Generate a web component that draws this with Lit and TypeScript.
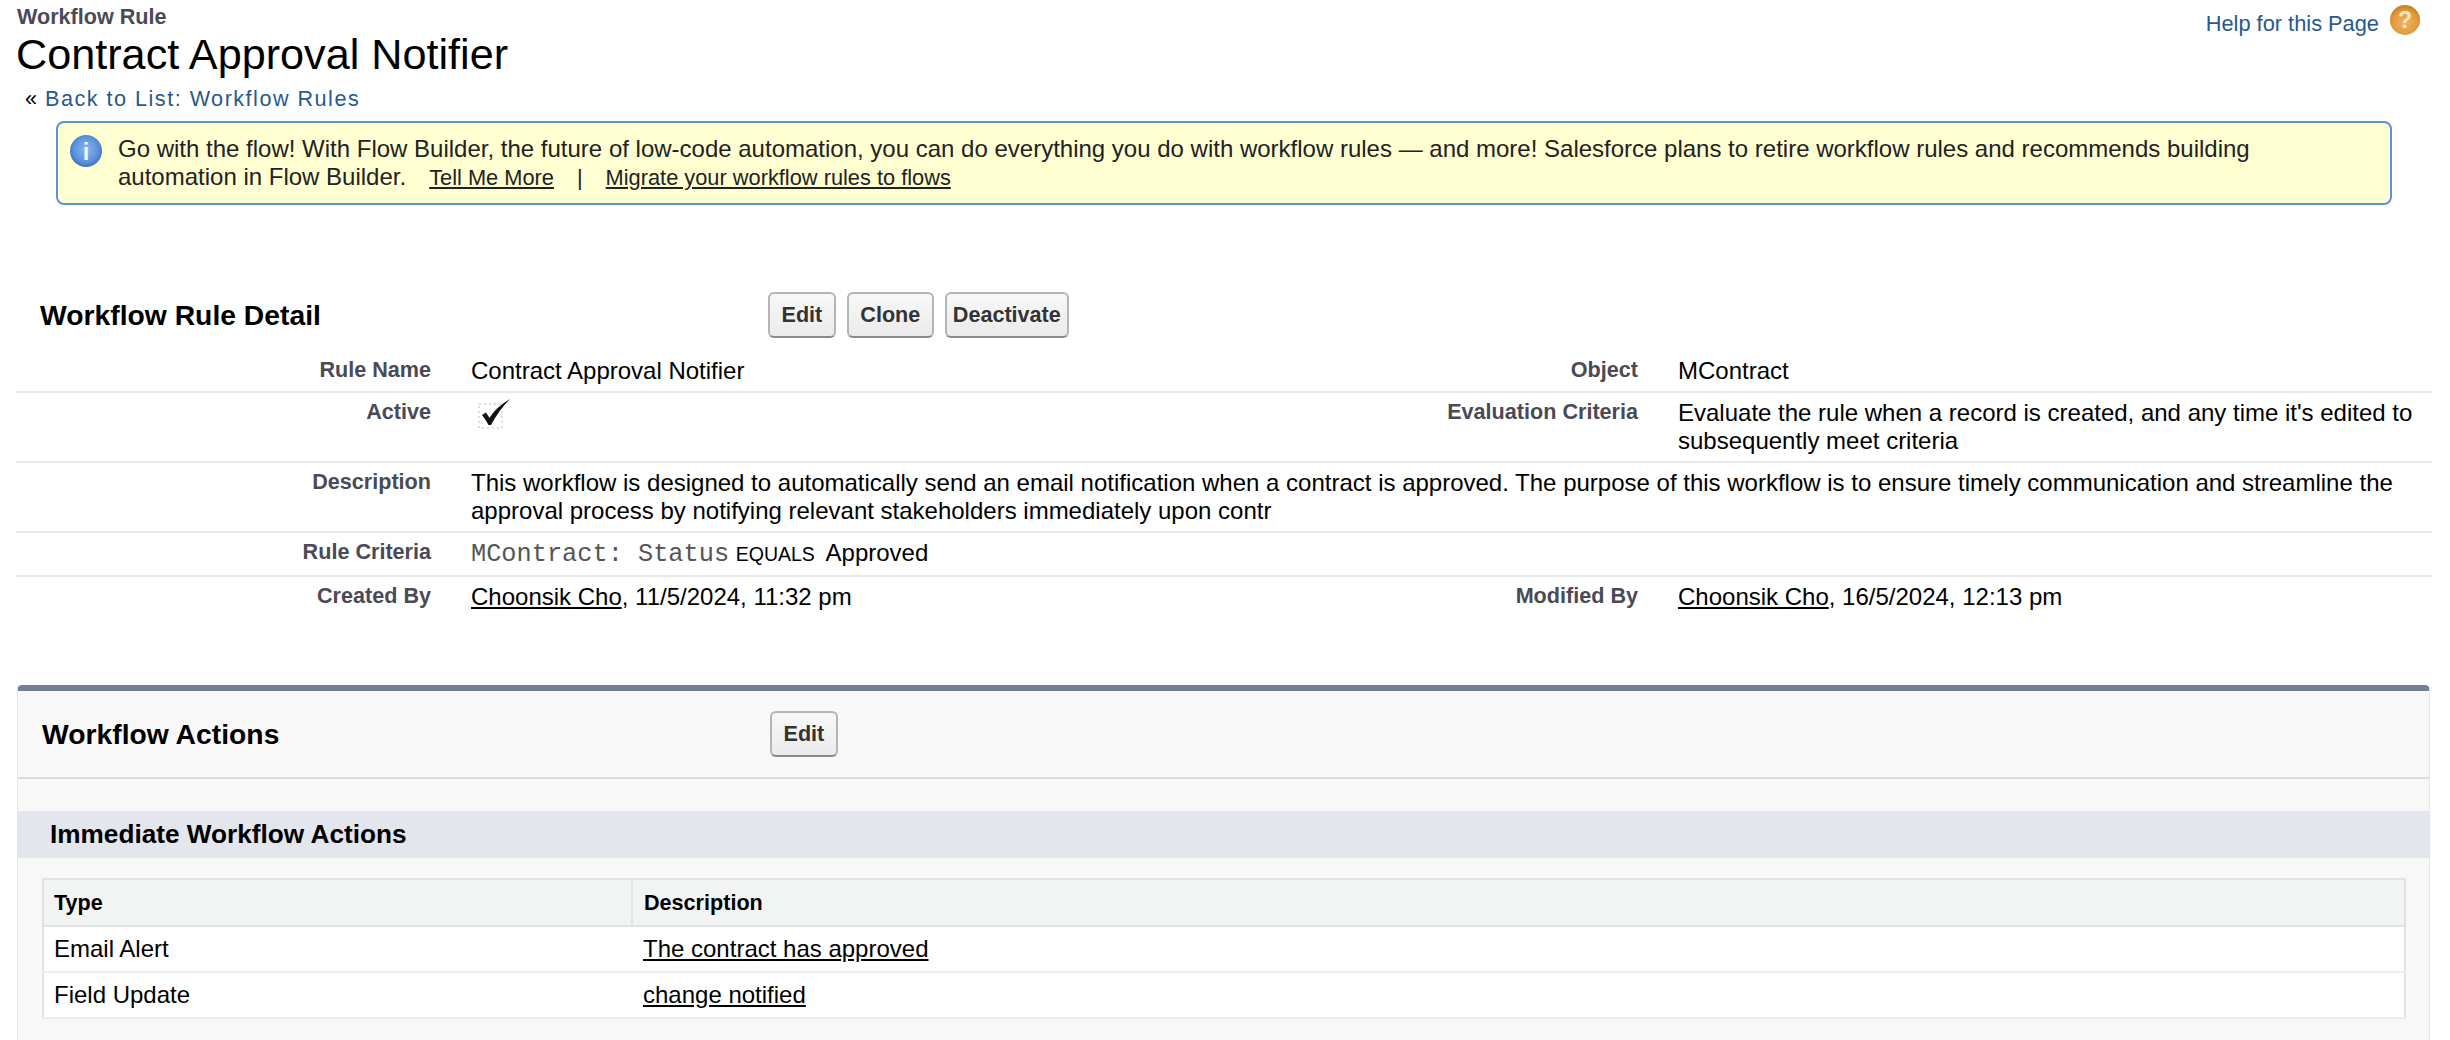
import { LitElement, html, css } from "lit";
import { customElement } from "lit/decorators.js";

@customElement("app-root")
export class AppRoot extends LitElement {
  static styles = css`
    :host {
      display: block;
      height: 1040px;
      overflow: hidden;
      background: #fff;
      color: #000;
      font-family: "Liberation Sans", Arial, sans-serif;
      font-size: 24px;
      line-height: 28px;
    }

    a {
      color: inherit;
    }

    /* Page header */
    .page-head {
      display: flex;
      justify-content: space-between;
      align-items: flex-start;
      height: 80px;
      padding: 4px 30px 0 16px;
    }

    .eyebrow {
      margin-left: 1px;
      font-size: 21.6px;
      line-height: 26px;
      font-weight: 700;
      color: #4a4a56;
    }

    .title {
      margin: -1px 0 0;
      font-size: 43.2px;
      line-height: 50px;
      font-weight: 400;
    }

    .help {
      display: flex;
      align-items: center;
      gap: 11px;
      margin-top: 1px;
      font-size: 21.8px;
      color: #27598f;
    }

    .help a {
      position: relative;
      top: 4px;
      text-decoration: none;
    }

    .round-icon {
      display: block;
      flex: none;
    }

    .round-icon text {
      font-family: "Liberation Sans", Arial, sans-serif;
      font-weight: 700;
      text-anchor: middle;
    }

    .back {
      height: 28px;
      margin-top: 1px;
      padding-left: 25px;
      font-size: 21.6px;
      line-height: 28px;
    }

    .back a {
      margin-left: 2px;
      color: #27598f;
      text-decoration: none;
      letter-spacing: 1.5px;
    }

    /* Notice */
    .notice {
      display: flex;
      gap: 16px;
      box-sizing: border-box;
      width: 2336px;
      height: 84px;
      margin: 8px 0 0 56px;
      padding: 12px;
      background: #ffffd1;
      border: 2px solid #5d92d9;
      border-radius: 8px;
      color: #222;
    }

    .notice-line {
      display: flex;
      align-items: baseline;
      gap: 23px;
    }

    .notice-line a,
    .notice-line span {
      font-size: 21.8px;
    }

    /* Detail block */
    .detail {
      margin: 87px 18px 0 16px;
    }

    .block-head {
      display: flex;
      align-items: center;
    }

    .block-title {
      margin: 0;
      font-size: 28.3px;
      line-height: 34px;
      font-weight: 700;
    }

    .detail .block-head {
      height: 45px;
      padding-left: 24px;
    }

    .detail .block-title {
      width: 728px;
    }

    .buttons {
      display: flex;
      gap: 11px;
    }

    .btn {
      box-sizing: border-box;
      height: 46px;
      padding: 0 6px;
      background: linear-gradient(#f8f8f8, #ebebeb);
      border: 2px solid #b5b5b5;
      border-bottom-color: #8a8a8a;
      border-radius: 6px;
      color: #333;
      font-family: inherit;
      font-size: 21.6px;
      font-weight: 700;
    }

    .btn.wide {
      padding: 0 11.5px;
    }

    .row {
      display: grid;
      grid-template-columns: 1fr 1014px;
      padding: 6px 0;
      border-bottom: 2px solid #e9e9e9;
    }

    .row.first {
      padding-top: 20px;
    }

    .row.last {
      border-bottom: 0;
    }

    .row.full {
      grid-template-columns: 1fr;
    }

    .cell {
      display: grid;
      grid-template-columns: 415px 1fr;
      column-gap: 40px;
    }

    .cell.right {
      grid-template-columns: 220px 1fr;
    }

    .label {
      margin-top: -1px;
      text-align: right;
      font-size: 21.6px;
      font-weight: 700;
      color: #4a4a56;
    }

    .check {
      display: block;
      margin: -1px 0 0 7px;
    }

    .mono {
      font-family: "Liberation Mono", "Courier New", monospace;
      font-size: 25.3px;
      color: #555;
    }

    .op {
      font-size: 19.5px;
    }

    .op-value {
      margin-left: 4px;
    }

    /* Actions panel */
    .panel {
      box-sizing: border-box;
      height: 400px;
      margin: 68px 20px 0 17px;
      background: #f8f8f8;
      border: 1px solid #e6e6e6;
      border-top: 6px solid #747e96;
      border-radius: 5px 5px 0 0;
    }

    .panel .block-head {
      height: 86px;
      padding-left: 24px;
      border-bottom: 2px solid #dbdbdb;
    }

    .panel .block-title {
      width: 728px;
    }

    .band {
      height: 47px;
      margin-top: 32px;
      padding-left: 32px;
      background: #e3e6ed;
      font-size: 26.2px;
      line-height: 47px;
      font-weight: 700;
    }

    .actions {
      box-sizing: border-box;
      width: 2364px;
      margin: 20px 0 0 24px;
      border-collapse: collapse;
      background: #fff;
      border: 2px solid #e0e3e5;
      table-layout: fixed;
    }

    .actions th,
    .actions td {
      padding: 0 10px;
      text-align: left;
      border-bottom: 2px solid #ececec;
    }

    .actions th + th,
    .actions td + td {
      padding-left: 11px;
    }

    .actions th {
      height: 45px;
      background: #f2f3f3;
      border-bottom-color: #e0e3e5;
      font-size: 21.6px;
      font-weight: 700;
    }

    .actions th + th {
      border-left: 2px solid #e0e3e5;
    }

    .actions td {
      height: 44px;
    }

    .actions .col-type {
      width: 567px;
    }
  `;

  render() {
    return html`
      <header class="page-head">
        <div>
          <div class="eyebrow">Workflow Rule</div>
          <h1 class="title">Contract Approval Notifier</h1>
        </div>
        <div class="help">
          <a href="#">Help for this Page</a>
          <svg class="round-icon" width="30" height="30" viewBox="0 0 30 30">
            <defs>
              <radialGradient id="help-fill" cx="0.5" cy="0.6" r="0.55">
                <stop offset="0" stop-color="#eeb45f" />
                <stop offset="0.75" stop-color="#e29a3c" />
                <stop offset="1" stop-color="#c98329" />
              </radialGradient>
            </defs>
            <circle cx="15" cy="15" r="15" fill="url(#help-fill)" />
            <text x="15" y="23" font-size="23" fill="#fbe6c4">?</text>
          </svg>
        </div>
      </header>

      <div class="back">« <a href="#">Back to List: Workflow Rules</a></div>

      <div class="notice">
        <svg class="round-icon" width="32" height="32" viewBox="0 0 32 32">
          <defs>
            <radialGradient id="info-fill" cx="0.5" cy="0.45" r="0.55">
              <stop offset="0" stop-color="#8db5ea" />
              <stop offset="0.7" stop-color="#5c92dc" />
              <stop offset="1" stop-color="#3a72c4" />
            </radialGradient>
          </defs>
          <circle cx="16" cy="16" r="16" fill="url(#info-fill)" />
          <text x="16" y="25" font-size="24" fill="#eef4fc">i</text>
        </svg>
        <div>
          <div>
            Go with the flow! With Flow Builder, the future of low-code automation, you can do
            everything you do with workflow rules — and more! Salesforce plans to retire workflow
            rules and recommends building
          </div>
          <div class="notice-line">
            automation in Flow Builder.
            <a href="#">Tell Me More</a>
            <span>|</span>
            <a href="#">Migrate your workflow rules to flows</a>
          </div>
        </div>
      </div>

      <section class="detail">
        <div class="block-head">
          <h2 class="block-title">Workflow Rule Detail</h2>
          <div class="buttons">
            <button class="btn wide">Edit</button>
            <button class="btn wide">Clone</button>
            <button class="btn">Deactivate</button>
          </div>
        </div>

        <div class="row first">
          <div class="cell">
            <div class="label">Rule Name</div>
            <div>Contract Approval Notifier</div>
          </div>
          <div class="cell right">
            <div class="label">Object</div>
            <div>MContract</div>
          </div>
        </div>

        <div class="row">
          <div class="cell">
            <div class="label">Active</div>
            <svg class="check" width="34" height="32" viewBox="0 0 34 32">
              <rect
                x="1"
                y="6"
                width="23"
                height="24"
                fill="none"
                stroke="#dcdcdc"
                stroke-width="2"
                stroke-dasharray="2 3"
              />
              <path
                d="M4 17 L8 14.5 L11.5 20 Q18 9 32 1 Q21 12 13 27 H10.5 Q8 22 4 17 Z"
                fill="#111"
              />
            </svg>
          </div>
          <div class="cell right">
            <div class="label">Evaluation Criteria</div>
            <div>
              Evaluate the rule when a record is created, and any time it's edited to subsequently
              meet criteria
            </div>
          </div>
        </div>

        <div class="row full">
          <div class="cell">
            <div class="label">Description</div>
            <div>
              This workflow is designed to automatically send an email notification when a contract
              is approved. The purpose of this workflow is to ensure timely communication and
              streamline the approval process by notifying relevant stakeholders immediately upon
              contr
            </div>
          </div>
        </div>

        <div class="row full">
          <div class="cell">
            <div class="label">Rule Criteria</div>
            <div>
              <span class="mono">MContract: Status</span> <span class="op">EQUALS</span>
              <span class="op-value">Approved</span>
            </div>
          </div>
        </div>

        <div class="row last">
          <div class="cell">
            <div class="label">Created By</div>
            <div><a href="#">Choonsik Cho</a>, 11/5/2024, 11:32 pm</div>
          </div>
          <div class="cell right">
            <div class="label">Modified By</div>
            <div><a href="#">Choonsik Cho</a>, 16/5/2024, 12:13 pm</div>
          </div>
        </div>
      </section>

      <section class="panel">
        <div class="block-head">
          <h2 class="block-title">Workflow Actions</h2>
          <button class="btn wide">Edit</button>
        </div>
        <div class="band">Immediate Workflow Actions</div>
        <table class="actions">
          <thead>
            <tr>
              <th class="col-type">Type</th>
              <th>Description</th>
            </tr>
          </thead>
          <tbody>
            <tr>
              <td>Email Alert</td>
              <td><a href="#">The contract has approved</a></td>
            </tr>
            <tr>
              <td>Field Update</td>
              <td><a href="#">change notified</a></td>
            </tr>
          </tbody>
        </table>
      </section>
    `;
  }
}
